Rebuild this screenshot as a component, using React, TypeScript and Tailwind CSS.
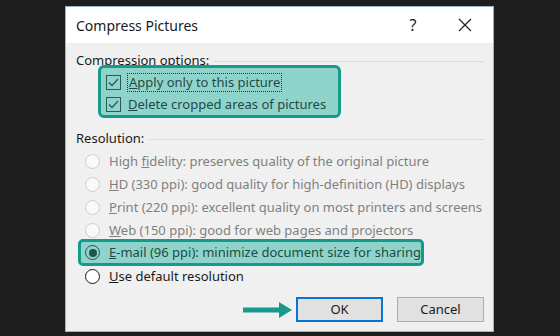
import React from "react";

const font = { fontFamily: '"Noto Sans", "Open Sans", sans-serif' };

const Checkbox: React.FC = () => (
  <svg width="15" height="15" viewBox="0 0 15 15" className="shrink-0">
    <rect x="0.5" y="0.5" width="14" height="14" fill="none" stroke="#2e5a55" />
    <polyline points="3,7.5 6,10.5 12,4" fill="none" stroke="#2e5a55" strokeWidth="1.3" />
  </svg>
);

const Radio: React.FC<{ state: "disabled" | "on" | "off" }> = ({ state }) => {
  if (state === "disabled")
    return <div className="w-[15px] h-[15px] rounded-full border border-[#cccccc] bg-[#f9f9f9] shrink-0" />;
  if (state === "on")
    return (
      <div className="w-[15px] h-[15px] rounded-full border border-[#2a4f4a] flex items-center justify-center shrink-0">
        <div className="w-[8px] h-[8px] rounded-full bg-[#24514b]" />
      </div>
    );
  return <div className="w-[15px] h-[15px] rounded-full border border-[#1a1a1a] bg-white shrink-0" />;
};

const SectionHeader: React.FC<{ label: string }> = ({ label }) => (
  <div className="flex items-center h-[18px] pr-[9px]">
    <span className="text-[#1a1a1a]">{label}</span>
    <div className="flex-1 h-px bg-[#dadada] ml-[5px] mt-[1px]" />
  </div>
);

export default function App() {
  return (
    <div className="w-[560px] h-[336px] bg-[#1e1e1e] pl-[65px] pt-[6px] text-[13px]" style={font}>
      <div className="w-[429px] h-[326px] border border-[#8cb6da] bg-[#f0f0f0] flex flex-col">
        {/* title bar */}
        <div className="h-[36px] bg-white flex items-center pl-[10px] shrink-0">
          <span className="text-[14px] text-[#1a1a1a] flex-1">Compress Pictures</span>
          <span className="text-[16px] text-[#222] w-[20px] text-center mr-[35px]">?</span>
          <svg width="14" height="14" viewBox="0 0 14 14" className="mr-[21px]">
            <path d="M1 1 L13 13 M13 1 L1 13" stroke="#222" strokeWidth="1.2" />
          </svg>
        </div>

        {/* body */}
        <div className="flex flex-col pl-[10px] pt-[9px]">
          <SectionHeader label="Compression options:" />

          <div className="ml-[22px] mt-[-5px] w-[243px] h-[53px] border-[3px] border-[#17998b] rounded-[6px] bg-[#8fd4cb] flex flex-col pl-[5px] pt-[4px] text-[#1f4a45]">
            <div className="h-[22px] flex items-center">
              <Checkbox />
              <span className="ml-[6px] px-[1px] border border-dotted border-[#1f3b38] leading-[17px]">
                <span className="underline">A</span>pply only to this picture
              </span>
            </div>
            <div className="h-[22px] flex items-center">
              <Checkbox />
              <span className="ml-[7px] leading-[17px]">
                <span className="underline">D</span>elete cropped areas of pictures
              </span>
            </div>
          </div>

          <div className="mt-[12px]">
            <SectionHeader label="Resolution:" />
          </div>

          <div className="flex flex-col mt-[2px] text-[#808080]">
            <div className="h-[23px] flex items-center pl-[9px]">
              <Radio state="disabled" />
              <span className="ml-[9px]">
                High <span className="underline">f</span>idelity: preserves quality of the original picture
              </span>
            </div>
            <div className="h-[23px] flex items-center pl-[9px]">
              <Radio state="disabled" />
              <span className="ml-[9px]">
                <span className="underline">H</span>D (330 ppi): good quality for high-definition (HD) displays
              </span>
            </div>
            <div className="h-[23px] flex items-center pl-[9px]">
              <Radio state="disabled" />
              <span className="ml-[9px]">
                <span className="underline">P</span>rint (220 ppi): excellent quality on most printers and screens
              </span>
            </div>
            <div className="h-[23px] flex items-center pl-[9px]">
              <Radio state="disabled" />
              <span className="ml-[9px]">
                <span className="underline">W</span>eb (150 ppi): good for web pages and projectors
              </span>
            </div>

            <div className="ml-[2px] mt-[-3px] w-[346px] h-[27px] border-[3px] border-[#17998b] rounded-[5px] bg-[#8fd4cb] flex items-center pl-[4px] text-[#1f4a45]">
              <Radio state="on" />
              <span className="ml-[9px]">
                <span className="underline">E</span>-mail (96 ppi): minimize document size for sharing
              </span>
            </div>

            <div className="h-[23px] flex items-center pl-[9px] -mt-[1px] text-[#1a1a1a]">
              <Radio state="off" />
              <span className="ml-[9px]">
                <span className="underline">U</span>se default resolution
              </span>
            </div>
          </div>

          {/* buttons */}
          <div className="flex items-center mt-[9px] pl-[167px]">
            <svg width="50" height="16" viewBox="0 0 50 16" className="mr-[3px]">
              <rect x="0" y="5.5" width="38" height="5" fill="#17998b" />
              <polygon points="36,0 49,8 36,16" fill="#17998b" />
            </svg>
            <button className="w-[87px] h-[25px] border-2 border-[#0a74d0] bg-[#e1e1e1] text-[#1a1a1a]">
              OK
            </button>
            <button className="w-[87px] h-[25px] ml-[14px] border border-[#adadad] bg-[#e1e1e1] text-[#1a1a1a]">
              Cancel
            </button>
          </div>
        </div>
      </div>
    </div>
  );
}
